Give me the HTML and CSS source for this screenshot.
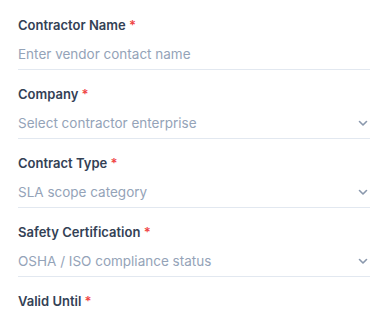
FILE: index.html
```html
<!DOCTYPE html>
<html>
<head>
<meta charset="utf-8">
<link rel="stylesheet" href="styles.css">
</head>
<body>
<form class="form">
  <div class="field">
    <label class="label">Contractor Name <span class="req">*</span></label>
    <div class="control">
      <span class="placeholder">Enter vendor contact name</span>
    </div>
  </div>
  <div class="field">
    <label class="label">Company <span class="req">*</span></label>
    <div class="control">
      <span class="placeholder">Select contractor enterprise</span>
      <svg class="chev" width="12" height="12" viewBox="0 0 12 12"><path d="M2.5 4.5 6 8l3.5-3.5" fill="none" stroke="#8a98ad" stroke-width="1.6" stroke-linecap="round" stroke-linejoin="round"/></svg>
    </div>
  </div>
  <div class="field">
    <label class="label">Contract Type <span class="req">*</span></label>
    <div class="control">
      <span class="placeholder">SLA scope category</span>
      <svg class="chev" width="12" height="12" viewBox="0 0 12 12"><path d="M2.5 4.5 6 8l3.5-3.5" fill="none" stroke="#8a98ad" stroke-width="1.6" stroke-linecap="round" stroke-linejoin="round"/></svg>
    </div>
  </div>
  <div class="field">
    <label class="label">Safety Certification <span class="req">*</span></label>
    <div class="control">
      <span class="placeholder">OSHA / ISO compliance status</span>
      <svg class="chev" width="12" height="12" viewBox="0 0 12 12"><path d="M2.5 4.5 6 8l3.5-3.5" fill="none" stroke="#8a98ad" stroke-width="1.6" stroke-linecap="round" stroke-linejoin="round"/></svg>
    </div>
  </div>
  <div class="field">
    <label class="label">Valid Until <span class="req">*</span></label>
  </div>
</form>
</body>
</html>
```
FILE: styles.css
```css
html, body {
  margin: 0;
  padding: 0;
  background: #ffffff;
}
body {
  font-family: Inter, "Noto Sans", sans-serif;
  width: 390px;
  height: 316px;
  overflow: hidden;
}
.form {
  padding: 1px 20px 0 18px;
  display: flex;
  flex-direction: column;
}
.field {
  display: flex;
  flex-direction: column;
  padding-top: 15px;
  gap: 4px;
}
.label {
  font-size: 13px;
  line-height: 18px;
  font-weight: 600;
  color: #334155;
}
.req {
  color: #ef4444;
}
.control {
  height: 31px;
  display: flex;
  align-items: center;
  justify-content: space-between;
  border-bottom: 1px solid #e2e8f0;
}
.placeholder {
  font-size: 13.5px;
  color: #94a3b8;
  padding-top: 1px;
}
.chev {
  margin-right: 1px;
}
```
